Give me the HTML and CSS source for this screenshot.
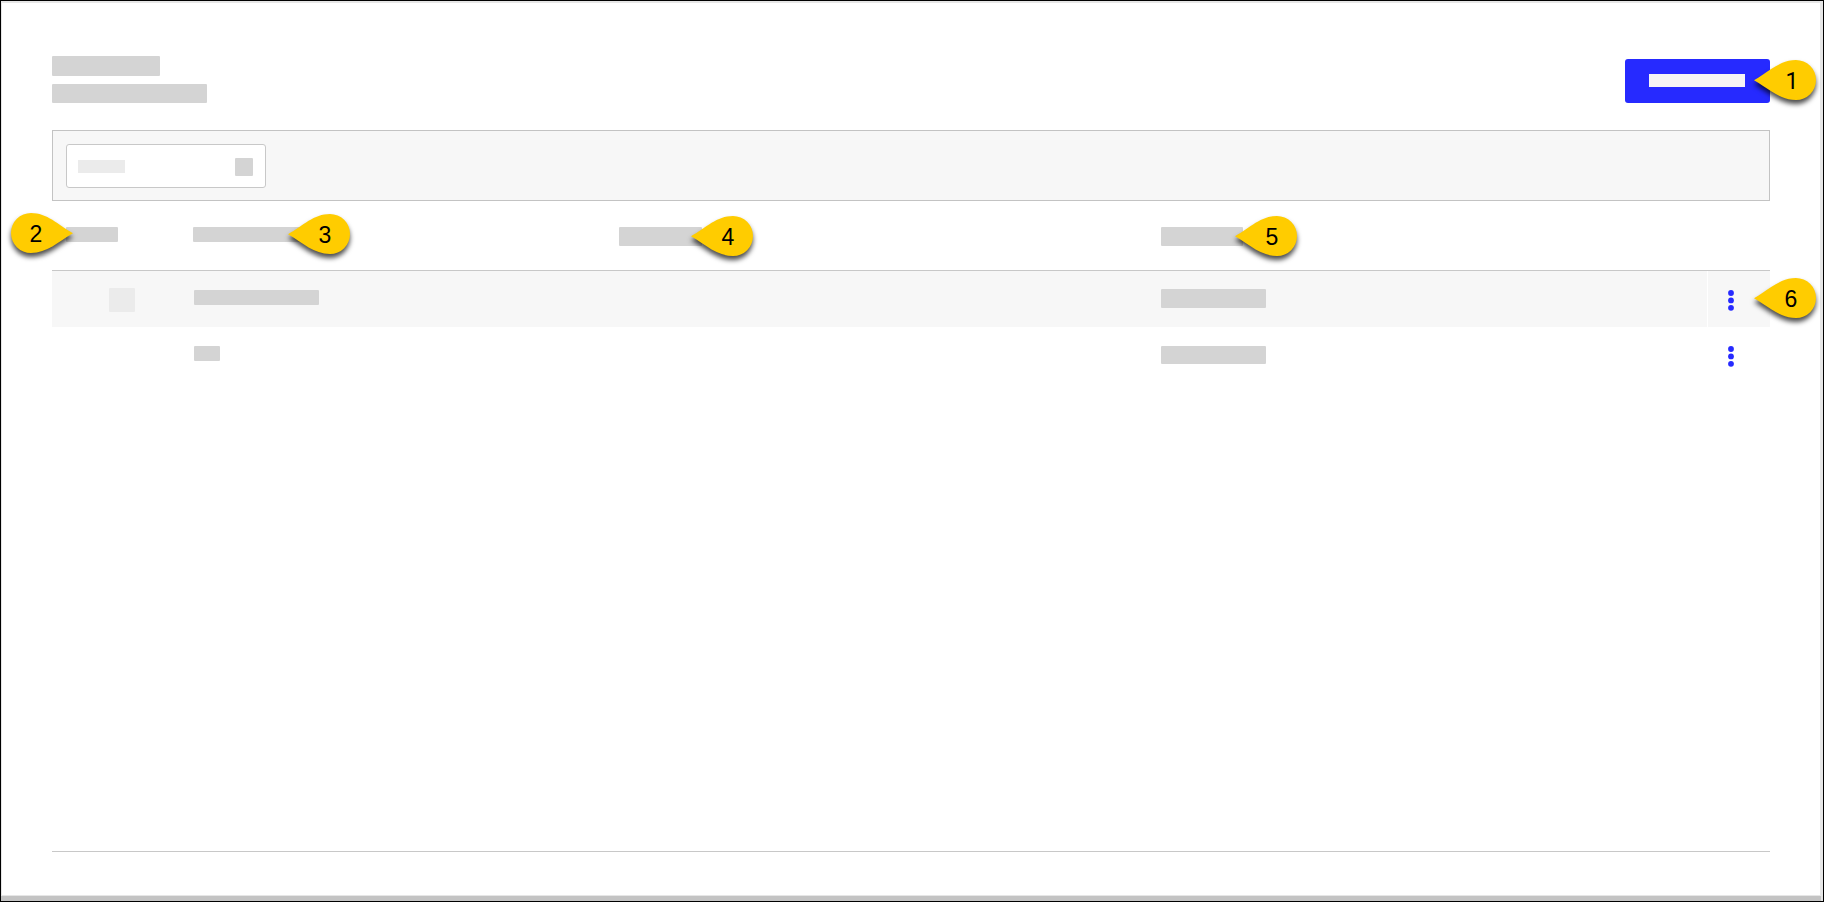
FILE: index.html
```html
<!DOCTYPE html>
<html lang="en">
<head>
  <meta charset="UTF-8">
  <meta name="viewport" content="width=device-width, initial-scale=1.0">
  <title>List overview</title>
  <link rel="stylesheet" href="styles.css">
</head>
<body>
  <svg class="defs" width="0" height="0">
    <symbol id="drop" viewBox="0 0 62 40">
      <path d="M0 20.3 C15 11.5 26 0 42 0 A20 20 0 0 1 42 40 C26 40 15 29.1 0 20.3 Z"/>
    </symbol>
    <symbol id="dots" viewBox="0 0 6 21">
      <circle cx="3" cy="3" r="2.9"/>
      <circle cx="3" cy="10.4" r="2.9"/>
      <circle cx="3" cy="17.8" r="2.9"/>
    </symbol>
  </svg>

  <div class="window">
    <main class="page">
      <header class="page-header">
        <div class="titles">
          <div class="bar title"></div>
          <div class="bar subtitle"></div>
        </div>
        <button class="primary"><span></span></button>
      </header>

      <div class="filters">
        <div class="select">
          <span class="placeholder"></span>
          <span class="caret"></span>
        </div>
      </div>

      <div class="table">
        <div class="row head">
          <div class="cell"><div class="bar h-order"></div></div>
          <div class="cell"><div class="bar h-name"></div></div>
          <div class="cell"><div class="bar h-desc"></div></div>
          <div class="cell"><div class="bar h-date"></div></div>
          <div class="cell"></div>
        </div>
        <div class="row shaded">
          <div class="cell"><div class="bar check"></div></div>
          <div class="cell"><div class="bar name-long"></div></div>
          <div class="cell"></div>
          <div class="cell"><div class="bar date"></div></div>
          <div class="cell menu"><svg><use href="#dots"/></svg></div>
        </div>
        <div class="row">
          <div class="cell"></div>
          <div class="cell"><div class="bar name-short"></div></div>
          <div class="cell"></div>
          <div class="cell"><div class="bar date date-small"></div></div>
          <div class="cell menu"><svg><use href="#dots"/></svg></div>
        </div>
      </div>
    </main>
  </div>

  <!-- numbered callouts -->
  <div class="pin pin-1"><svg><use href="#drop"/></svg><span>1</span></div>
  <div class="pin pin-2 flip"><svg><use href="#drop"/></svg><span>2</span></div>
  <div class="pin pin-3"><svg><use href="#drop"/></svg><span>3</span></div>
  <div class="pin pin-4"><svg><use href="#drop"/></svg><span>4</span></div>
  <div class="pin pin-5"><svg><use href="#drop"/></svg><span>5</span></div>
  <div class="pin pin-6"><svg><use href="#drop"/></svg><span>6</span></div>
</body>
</html>
```

FILE: styles.css
```css
* { box-sizing: border-box; margin: 0; padding: 0; }
body {
  position: relative;
  height: 902px;
  overflow: hidden;
  border: 1px solid #000;
  background: #c3c3c3;
  box-shadow: inset -2px 0 #e3e3e3;
  font-family: "Liberation Sans", Arial, sans-serif;
}
.defs {
  display: block;
}
.window {
  height: 895px;
  border: 1px solid #e6e6e6;
  border-top-width: 2px;
  border-right-width: 3px;
  background: #fff;
}
.page {
  display: flex;
  flex-direction: column;
  width: 1718px;
  height: 849px;
  margin-left: 50px;
  padding-top: 53px;
  border-bottom: 1px solid #c8c8c8;
}
.bar {
  background: #d4d4d4;
  border-radius: 1px;
}
.page-header {
  display: flex;
  justify-content: space-between;
  height: 74px;
}
.titles {
  display: flex;
  flex-direction: column;
  gap: 8px;
}
.title { width: 108px; height: 20px; }
.subtitle { width: 155px; height: 19px; }
.primary {
  display: flex;
  align-items: center;
  width: 145px;
  height: 44px;
  margin-top: 3px;
  padding-left: 24px;
  border: none;
  border-radius: 3px;
  background: #262aff;
}
.primary span {
  width: 96px;
  height: 13px;
  margin-bottom: 1px;
  background: #f5f5f5;
}
.filters {
  height: 71px;
  padding: 13px;
  border: 1px solid #c3c3c3;
  background: #f7f7f7;
}
.select {
  display: flex;
  align-items: center;
  justify-content: space-between;
  width: 200px;
  height: 44px;
  padding: 2px 12px 0 11px;
  border: 1px solid #c8c8c8;
  border-radius: 3px;
  background: #fff;
}
.placeholder {
  width: 47px;
  height: 13px;
  margin-bottom: 1px;
  background: #ebebeb;
}
.caret {
  width: 18px;
  height: 18px;
  border-radius: 1px;
  background: #d4d4d4;
}
.row {
  display: grid;
  grid-template-columns: 141px 426px 542px 546px 63px;
  height: 56px;
}
.head {
  height: 70px;
  padding-top: 26px;
  border-bottom: 1px solid #c8c8c8;
}
.shaded { background: #f7f7f7; }
.h-order { width: 52px; height: 15px; margin-left: 14px; }
.h-name { width: 108px; height: 15px; }
.h-desc { width: 83px; height: 19px; }
.h-date { width: 82px; height: 19px; }
.check { width: 26px; height: 24px; margin: 17px 0 0 57px; background: #ebebeb; }
.name-long { width: 125px; height: 15px; margin: 19px 0 0 1px; }
.name-short { width: 26px; height: 15px; margin: 19px 0 0 1px; }
.date { width: 105px; height: 19px; margin-top: 18px; }
.date-small { height: 18px; margin-top: 19px; }
.menu {
  padding: 19px 0 0 20px;
  border-left: 1px solid #fff;
}
.menu svg {
  display: block;
  width: 6px;
  height: 21px;
  fill: #262aff;
}
.pin {
  position: absolute;
  width: 62px;
  height: 40px;
}
.pin svg {
  display: block;
  width: 62px;
  height: 40px;
  fill: #fc0;
  overflow: visible;
  filter: drop-shadow(0 4px 2.5px rgba(0, 0, 0, 0.7));
}
.pin span {
  position: absolute;
  top: 9px;
  left: 25px;
  width: 24px;
  font-size: 23px;
  line-height: 24px;
  text-align: center;
  color: #000;
}
.flip svg { transform: scaleX(-1); }
.flip span { left: 13px; }
.pin-1 { left: 1753px; top: 59px; }
.pin-1 span { top: 10px; left: 26px; font-family: Roboto, sans-serif; }
.pin-2 { left: 10px; top: 212px; }
.pin-3 { left: 287px; top: 213px; }
.pin-4 { left: 690px; top: 215px; }
.pin-5 { left: 1234px; top: 215px; }
.pin-6 { left: 1753px; top: 277px; }
```
